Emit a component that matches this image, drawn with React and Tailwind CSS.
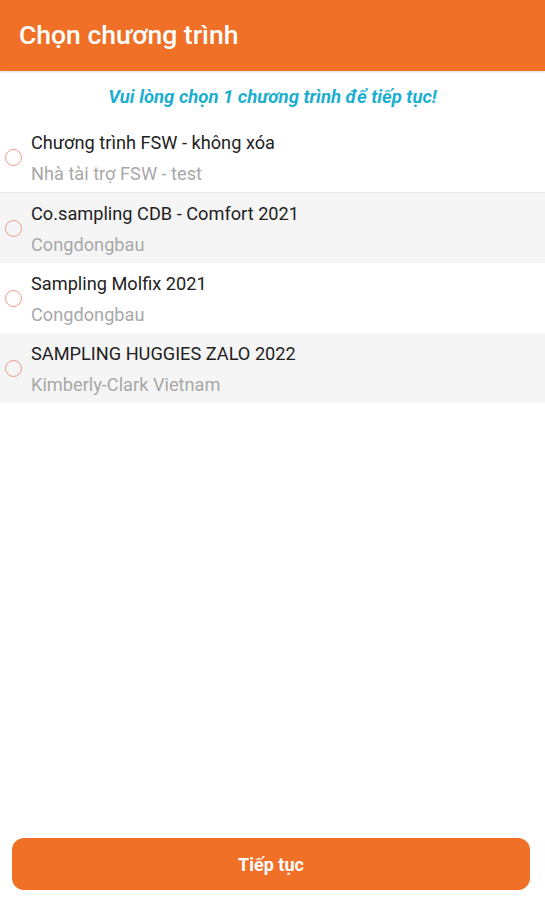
import React from "react";

const items = [
  { t: "Chương trình FSW - không xóa", s: "Nhà tài trợ FSW - test", bg: "bg-white", border: true },
  { t: "Co.sampling CDB - Comfort 2021", s: "Congdongbau", bg: "bg-[#f5f5f5]" },
  { t: "Sampling Molfix 2021", s: "Congdongbau", bg: "bg-white" },
  { t: "SAMPLING HUGGIES ZALO 2022", s: "Kimberly-Clark Vietnam", bg: "bg-[#f5f5f5]" },
];

export default function App() {
  return (
    <div className="w-[545px] h-[900px] bg-white flex flex-col font-['Roboto',sans-serif]">
      <div className="h-[71px] bg-[#ef7026] flex items-center pl-[19px] shadow-[0_1px_2px_rgba(0,0,0,0.15)]">
        <span className="text-white text-[26.5px] font-medium leading-none">Chọn chương trình</span>
      </div>
      <div className="h-[52px] flex items-center justify-center">
        <span className="italic font-bold text-[18.5px] text-[#1aaed1] leading-none">Vui lòng chọn 1 chương trình để tiếp tục!</span>
      </div>
      <div className="flex flex-col">
        {items.map((it, i) => (
          <div key={i} className={`${it.bg} h-[70px] flex items-center ${it.border ? "border-b border-[#e6e6e6]" : ""}`}>
            <div className="w-[31px] flex pl-[5px]">
              <div className="w-[17px] h-[17px] rounded-full border-[1.5px] border-[#ec9a8b]" />
            </div>
            <div className="flex flex-col gap-[9px] mt-[2px]">
              <span className="text-[18.2px] text-[#222] leading-[22px]">{it.t}</span>
              <span className="text-[18.2px] text-[#a8a8a8] leading-[22px]">{it.s}</span>
            </div>
          </div>
        ))}
      </div>
      <div className="flex-1" />
      <div className="pl-[12px] pr-[15px] pb-[10px]">
        <div className="h-[52px] rounded-[12px] bg-[#ef7026] flex items-center justify-center">
          <span className="text-white font-bold text-[18px]">Tiếp tục</span>
        </div>
      </div>
    </div>
  );
}
